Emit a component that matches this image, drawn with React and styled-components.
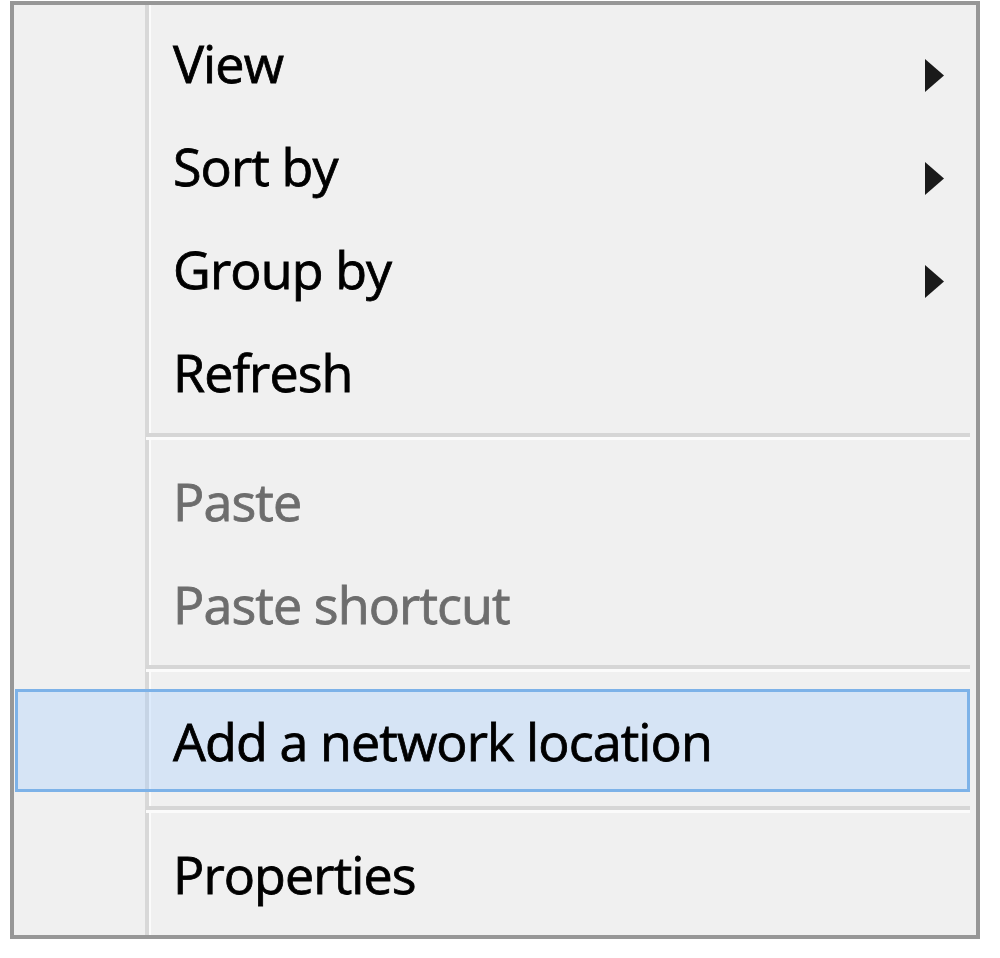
import React from 'react';
import styled, { createGlobalStyle } from 'styled-components';

const GlobalStyle = createGlobalStyle`
  html, body {
    margin: 0;
    padding: 0;
    background: #ffffff;
  }
`;

const items = [
  { label: 'View', submenu: true },
  { label: 'Sort by', submenu: true },
  { label: 'Group by', submenu: true },
  { label: 'Refresh' },
  { separator: true },
  { label: 'Paste', disabled: true },
  { label: 'Paste shortcut', disabled: true },
  { separator: true },
  { label: 'Add a network location', highlighted: true },
  { separator: true },
  { label: 'Properties' },
];

function Arrow() {
  return (
    <ArrowIcon width="21" height="35" viewBox="0 0 21 35">
      <path d="M1 1 L20 17.5 L1 34 Z" fill="#1a1a1a" />
    </ArrowIcon>
  );
}

function ContextMenu() {
  return (
    <Menu>
      {items.map((item, i) =>
        item.separator ? (
          <Separator key={i} />
        ) : (
          <Row key={i} $highlighted={item.highlighted}>
            <Label $disabled={item.disabled}>{item.label}</Label>
            {item.submenu && <Arrow />}
          </Row>
        )
      )}
    </Menu>
  );
}

export default function App() {
  return (
    <>
      <GlobalStyle />
      <Page>
        <ContextMenu />
      </Page>
    </>
  );
}

const Page = styled.div`
  width: 1000px;
  height: 958px;
  padding: 1px 0 0 10px;
  box-sizing: border-box;
  overflow: hidden;
`;

const Menu = styled.div`
  width: 970px;
  box-sizing: border-box;
  border: 4px solid #979797;
  padding: 6px 0 10px 0;
  display: flex;
  flex-direction: column;
  background:
    linear-gradient(
      to right,
      transparent 131px,
      #d8d8d8 131px,
      #d8d8d8 135px,
      #fbfbfb 135px,
      #fbfbfb 137px,
      transparent 137px
    ),
    #f0f0f0;
`;

const Row = styled.div`
  height: 103px;
  box-sizing: border-box;
  display: flex;
  align-items: flex-start;
  justify-content: space-between;
  margin: ${(p) => (p.$highlighted ? '8px 6px 4px 1px' : '0 6px 0 1px')};
  padding: 0 22px 0 155px;
  border: 3px solid ${(p) => (p.$highlighted ? '#7db2e8' : 'transparent')};
  background: ${(p) => (p.$highlighted ? 'rgba(160, 204, 255, 0.33)' : 'transparent')};
`;

const Label = styled.span`
  font-family: "Open Sans", "Noto Sans", sans-serif;
  font-size: 52px;
  letter-spacing: -0.9px;
  line-height: 97px;
  color: ${(p) => (p.$disabled ? '#6d6d6d' : '#000000')};
  -webkit-text-stroke: 0.8px ${(p) => (p.$disabled ? '#6d6d6d' : '#000000')};
  white-space: nowrap;
`;

const ArrowIcon = styled.svg`
  display: block;
  margin-top: 44px;
  flex-shrink: 0;
`;

const Separator = styled.div`
  height: 4px;
  margin: 10px 6px 9px 132px;
  background: #d6d6d6;
  border-bottom: 3px solid #fbfbfb;
`;
